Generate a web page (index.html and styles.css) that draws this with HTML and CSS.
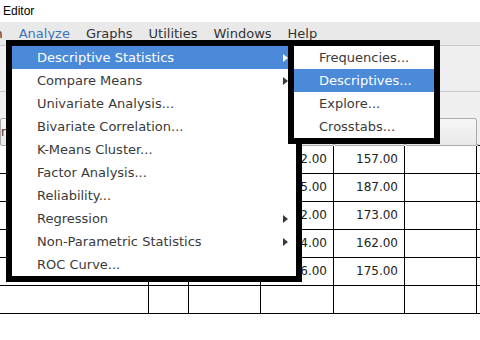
FILE: index.html
```html
<!DOCTYPE html>
<html>
<head>
    <title>Editor</title>
    <link rel="stylesheet" href="styles.css">
</head>
<body>

<div class="window">
    <div class="titlebar">Editor</div>

    <ul class="menubar">
        <li>Transform</li>
        <li class="active">Analyze</li>
        <li>Graphs</li>
        <li>Utilities</li>
        <li>Windows</li>
        <li>Help</li>
    </ul>

    <div class="toolbar"></div>
    <div class="toolbar-low"></div>

    <div class="sheet">
        <div class="row head">
            <div class="cell">r:</div>
            <div class="cell"></div>
            <div class="cell"></div>
            <div class="cell"></div>
            <div class="cell"></div>
            <div class="cell"></div>
            <div class="cell last"></div>
        </div>
        <div class="row">
            <div class="cell"></div><div class="cell"></div><div class="cell"></div>
            <div class="cell num">152.00</div><div class="cell num">157.00</div>
            <div class="cell"></div><div class="cell last"></div>
        </div>
        <div class="row">
            <div class="cell"></div><div class="cell"></div><div class="cell"></div>
            <div class="cell num">165.00</div><div class="cell num">187.00</div>
            <div class="cell"></div><div class="cell last"></div>
        </div>
        <div class="row">
            <div class="cell"></div><div class="cell"></div><div class="cell"></div>
            <div class="cell num">162.00</div><div class="cell num">173.00</div>
            <div class="cell"></div><div class="cell last"></div>
        </div>
        <div class="row">
            <div class="cell"></div><div class="cell"></div><div class="cell"></div>
            <div class="cell num">154.00</div><div class="cell num">162.00</div>
            <div class="cell"></div><div class="cell last"></div>
        </div>
        <div class="row">
            <div class="cell"></div><div class="cell"></div><div class="cell"></div>
            <div class="cell num">166.00</div><div class="cell num">175.00</div>
            <div class="cell"></div><div class="cell last"></div>
        </div>
        <div class="row">
            <div class="cell"></div><div class="cell"></div><div class="cell"></div>
            <div class="cell"></div><div class="cell"></div>
            <div class="cell"></div><div class="cell last"></div>
        </div>
    </div>

    <!-- Analyze dropdown -->
    <ul class="menu menu-main">
        <li class="selected">Descriptive Statistics <span class="arrow"></span></li>
        <li>Compare Means <span class="arrow"></span></li>
        <li>Univariate Analysis...</li>
        <li>Bivariate Correlation...</li>
        <li>K-Means Cluster...</li>
        <li>Factor Analysis...</li>
        <li>Reliability...</li>
        <li>Regression <span class="arrow"></span></li>
        <li>Non-Parametric Statistics <span class="arrow"></span></li>
        <li>ROC Curve...</li>
    </ul>

    <!-- Descriptive Statistics submenu -->
    <ul class="menu menu-sub">
        <li>Frequencies...</li>
        <li class="selected">Descriptives...</li>
        <li>Explore...</li>
        <li>Crosstabs...</li>
    </ul>
</div>

</body>
</html>
```

FILE: styles.css
```css
body {
    margin: 0;
    font-family: 'DejaVu Sans', sans-serif;
    background-color: #fff;
    overflow: hidden;
}

.window {
    position: relative;
    width: 480px;
    height: 340px;
    overflow: hidden;
    background-color: #fff;
}

.titlebar {
    height: 22px;
    line-height: 22px;
    padding-left: 3px;
    font-family: 'Liberation Sans', Arial, sans-serif;
    font-size: 12px;
    color: #000;
    background-color: #fff;
}

.menubar {
    display: flex;
    list-style: none;
    margin: 0 0 0 -70px;
    padding: 0;
    height: 23px;
    background-color: #e9e9e9;
    border-bottom: 1px solid #c9c9c9;
}

.menubar li {
    padding: 0 8px;
    font-size: 13px;
    line-height: 24px;
    color: #333;
    white-space: nowrap;
}

.menubar li.active {
    color: #3b73b9;
}

.toolbar {
    height: 45px;
    background-color: #efefef;
    border-bottom: 1px solid #c9c9c9;
}

.toolbar-low {
    height: 26px;
    background-color: #efefef;
}

.sheet {
    font-size: 12px;
    color: #222;
}

.row {
    display: grid;
    grid-template-columns: 149px 40px 72px 73px 71px 72px 1fr;
}

.cell {
    box-sizing: border-box;
    height: 28px;
    border-right: 1px solid #000;
    border-bottom: 1px solid #000;
    padding: 0 6px;
    line-height: 27px;
    white-space: nowrap;
    overflow: hidden;
}

.cell.last {
    border-right: none;
}

.cell.num {
    text-align: right;
}

.head .cell {
    background: linear-gradient(#f6f6f6, #e9e9e9);
    border: 1px solid #a9a9a9;
    border-radius: 2px;
    padding-left: 0;
    color: #333;
}

.head .cell.last {
    background: #efefef;
    border: none;
    border-bottom: 1px solid #000;
}

.menu {
    position: absolute;
    top: 40px;
    margin: 0;
    padding: 0;
    list-style: none;
    background-color: #fff;
    border: 6px solid #000;
    font-size: 13px;
    color: #3a3a3a;
}

.menu li {
    display: flex;
    justify-content: space-between;
    align-items: center;
    height: 23px;
    padding: 0 8px 0 25px;
    white-space: nowrap;
}

.menu li.selected {
    background-color: #4a8ad8;
    color: #fff;
}

.menu-main {
    left: 6px;
    width: 296px;
    box-sizing: border-box;
}

.menu-sub {
    left: 288px;
    width: 152px;
    box-sizing: border-box;
}

.arrow {
    width: 0;
    height: 0;
    border-left: 5px solid #3a3a3a;
    border-top: 4px solid transparent;
    border-bottom: 4px solid transparent;
}

.selected .arrow {
    border-left-color: #fff;
}
```
